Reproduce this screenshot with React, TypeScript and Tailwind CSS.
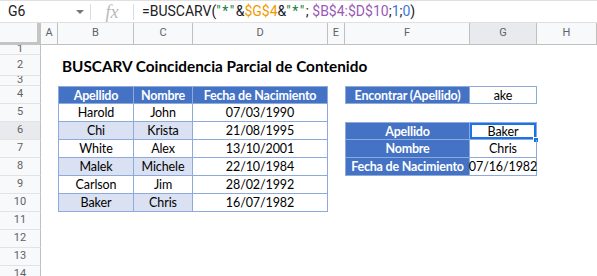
import React from 'react'

const cols = ['A', 'B', 'C', 'D', 'E', 'F', 'G', 'H']

const data = [
  ['Harold', 'John', '07/03/1990'],
  ['Chi', 'Krista', '21/08/1995'],
  ['White', 'Alex', '13/10/2001'],
  ['Malek', 'Michele', '22/10/1984'],
  ['Carlson', 'Jim', '28/02/1992'],
  ['Baker', 'Chris', '16/07/1982'],
]

const gridCols = 'grid grid-cols-[41px_17px_76px_59px_135px_17px_125px_67px_60px]'
const cell = 'flex items-center justify-center pt-[2px] text-[12.5px] tracking-[-0.1px] leading-none text-black whitespace-nowrap'
const head = 'flex items-center justify-center pt-[2px] text-[12.5px] tracking-[-0.2px] leading-none font-bold text-white bg-[#4472c4] whitespace-nowrap'

function RowHead({ n, h, active }: { n: number; h: string; active?: boolean }) {
  return (
    <div
      className={`${h} flex items-center justify-center overflow-hidden border-r border-b border-r-[#c0c0c0] border-b-[#e2e3e3] text-[11px] text-[#5f6368] ${
        active ? 'bg-[#e8eaed]' : 'bg-[#f8f9fa]'
      }`}
      style={{ fontFamily: 'Roboto, sans-serif' }}
    >
      {n}
    </div>
  )
}

export default function App() {
  return (
    <div className="w-[597px] h-[276px] overflow-hidden bg-white" style={{ fontFamily: 'Lato, sans-serif' }}>
      {/* formula bar */}
      <div
        className="h-[23px] flex items-center border-t border-b border-[#e0e0e0] text-[14px] text-[#202124]"
        style={{ fontFamily: 'Roboto, "Liberation Sans", sans-serif' }}
      >
        <div className="w-[90px] flex items-center justify-between pl-[8px] pr-[6px]">
          <span>G6</span>
          <span className="w-0 h-0 border-l-[4px] border-r-[4px] border-t-[4px] border-l-transparent border-r-transparent border-t-[#777]" />
        </div>
        <div className="w-px h-[16px] bg-[#dadce0]" />
        <div
          className="w-[42px] flex justify-center text-[18px] italic text-[#b8b8b8] leading-none"
          style={{ fontFamily: '"Liberation Serif", serif' }}
        >
          fx
        </div>
        <div className="w-px h-[16px] bg-[#dadce0]" />
        <div className="pl-[8px] whitespace-nowrap">
          =BUSCARV(<span className="text-[#188038] tracking-[1.5px]">"*"</span>&amp;
          <span className="text-[#f29900]">$G$4</span>&amp;
          <span className="text-[#188038] tracking-[1.5px]">"*"</span>; <span className="text-[#9b59b6]">$B$4:$D$10</span>;
          <span className="text-[#3c78d8]">1</span>;<span className="text-[#3c78d8]">0</span>)
        </div>
      </div>

      {/* column headers */}
      <div className={`${gridCols} h-[22px]`} style={{ fontFamily: 'Roboto, sans-serif' }}>
        <div className="bg-[#f8f9fa] border-r-[4px] border-b-[3px] border-[#c4c4c4]" />
        {cols.map((c) => (
          <div
            key={c}
            className={`flex items-center justify-center border-r border-b border-[#c0c0c0] text-[11px] text-[#5f6368] ${
              c === 'G' ? 'bg-[#e8eaed]' : 'bg-[#f8f9fa]'
            }`}
          >
            {c}
          </div>
        ))}
      </div>

      {/* row 1 */}
      <div className={`${gridCols} h-[10px]`}>
        <RowHead n={1} h="h-[10px]" />
      </div>

      {/* row 2: title */}
      <div className={`${gridCols} h-[21px]`}>
        <RowHead n={2} h="h-[21px]" />
        <div />
        <div className="col-span-7 flex items-end pl-[4px] pb-[2px] text-[15.3px] font-bold text-black whitespace-nowrap leading-none">
          BUSCARV Coincidencia Parcial de Contenido
        </div>
      </div>

      {/* row 3 */}
      <div className={`${gridCols} h-[10px]`}>
        <RowHead n={3} h="h-[10px]" />
      </div>

      {/* row 4: headers */}
      <div className={`${gridCols} h-[18px]`}>
        <RowHead n={4} h="h-[18px]" />
        <div />
        <div className={`${head} border border-[#8eaadb]`}>Apellido</div>
        <div className={`${head} border-t border-r border-b border-[#8eaadb]`}>Nombre</div>
        <div className={`${head} border-t border-r border-b border-[#8eaadb]`}>Fecha de Nacimiento</div>
        <div />
        <div className={`${head} border border-[#8eaadb]`}>Encontrar (Apellido)</div>
        <div className={`${cell} border-t border-r border-b border-[#8eaadb]`}>ake</div>
        <div />
      </div>

      {/* rows 5-10 */}
      {data.map((r, i) => {
        const n = i + 5
        const shade = n % 2 === 0 ? 'bg-[#d9e1f2]' : 'bg-white'
        const right =
          n === 6 ? ['Apellido', 'Baker'] : n === 7 ? ['Nombre', 'Chris'] : n === 8 ? ['Fecha de Nacimiento', '07/16/1982'] : null
        return (
          <div key={n} className={`${gridCols} h-[18px]`}>
            <RowHead n={n} h="h-[18px]" active={n === 6} />
            <div />
            <div className={`${cell} ${shade} border-l border-r border-b border-[#8eaadb]`}>{r[0]}</div>
            <div className={`${cell} ${shade} border-r border-b border-[#8eaadb]`}>{r[1]}</div>
            <div className={`${cell} border-r border-b border-[#8eaadb]`}>{r[2]}</div>
            <div />
            {right ? (
              <>
                <div className={`${head} border-l border-r border-b border-[#8eaadb] ${n === 6 ? 'border-t' : ''}`}>
                  {right[0]}
                </div>
                <div className={`relative ${cell} border-r border-b border-[#8eaadb] ${n === 6 ? 'border-t' : ''}`}>
                  {right[1]}
                  {n === 6 && (
                    <>
                      <div className="absolute inset-0 border-2 border-[#1a73e8]" />
                      <div className="absolute right-[-3px] bottom-[-4px] w-[6px] h-[6px] bg-[#1a73e8] border border-white" />
                    </>
                  )}
                </div>
              </>
            ) : (
              <>
                <div />
                <div />
              </>
            )}
            <div />
          </div>
        )
      })}

      {/* rows 11-14 */}
      {[11, 12, 13, 14].map((n) => (
        <div key={n} className={`${gridCols} h-[18px]`}>
          <RowHead n={n} h="h-[18px]" />
        </div>
      ))}
    </div>
  )
}
